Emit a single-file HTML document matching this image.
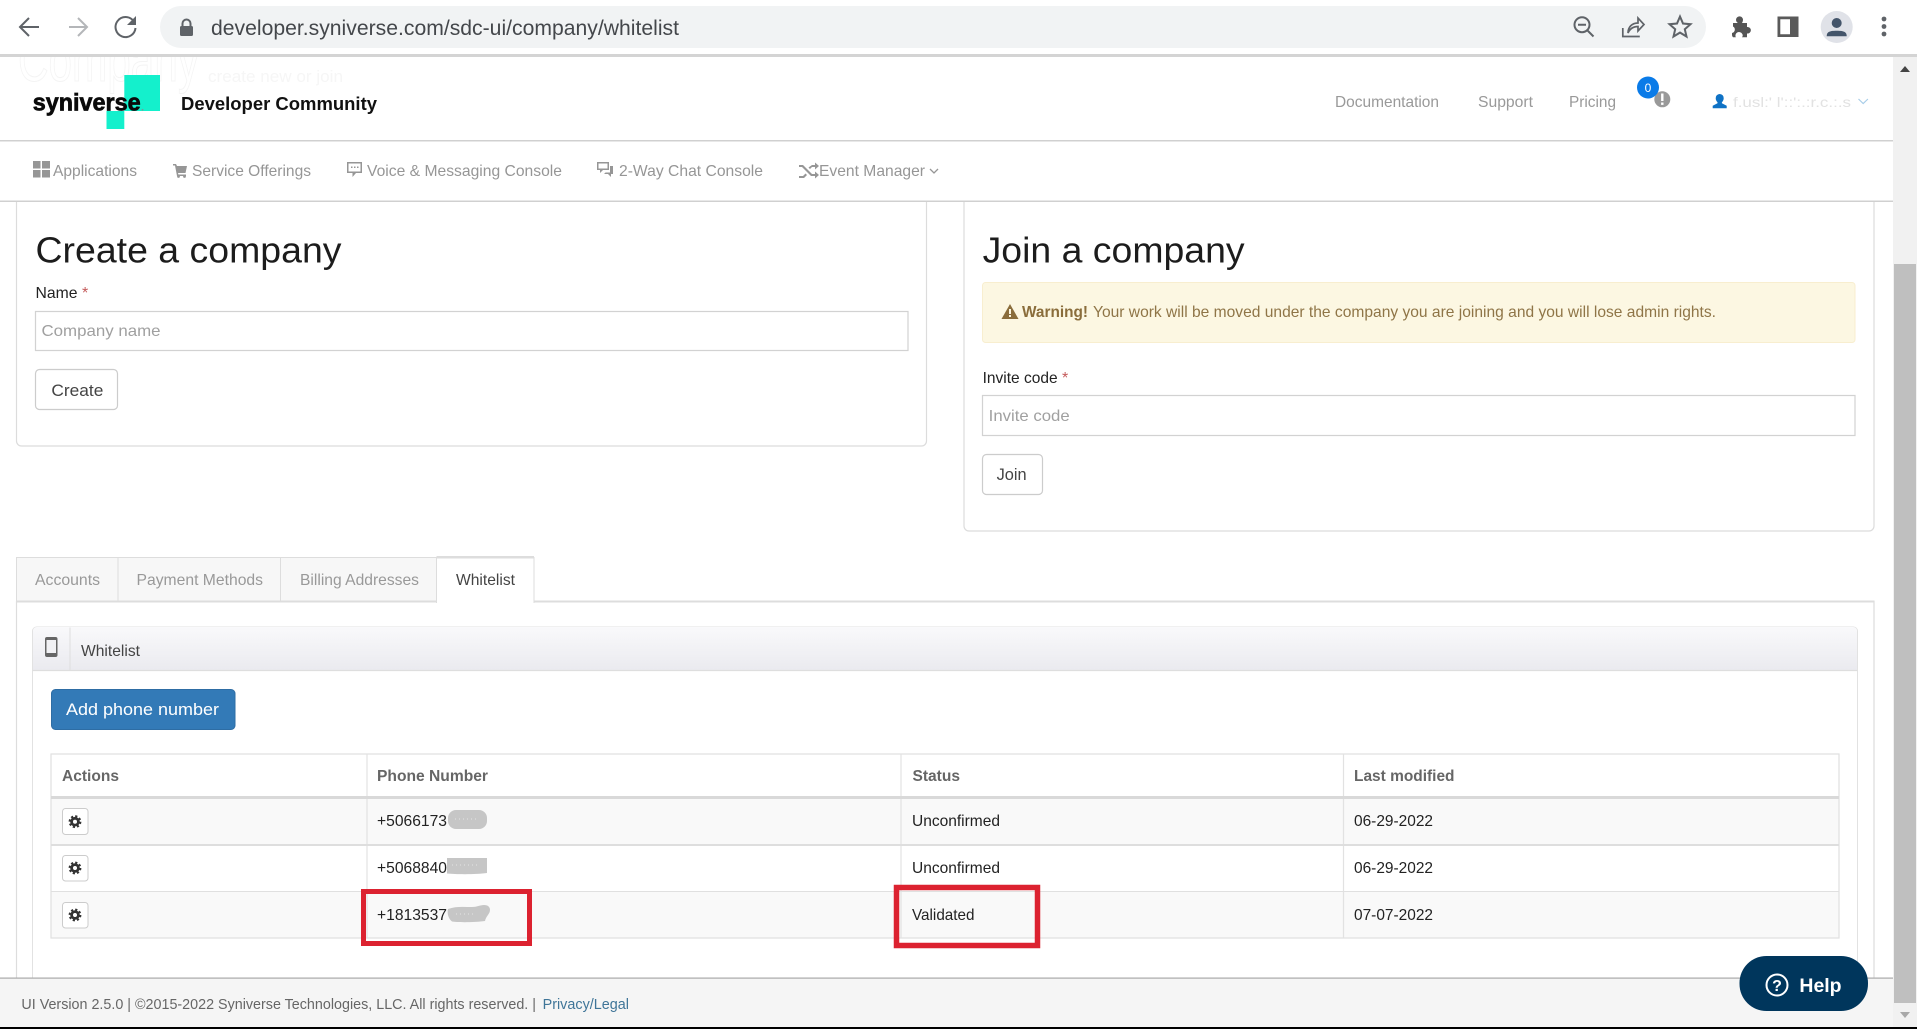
<!DOCTYPE html>
<html lang="en">
<head>
<meta charset="utf-8">
<title>Whitelist</title>
<style>
html,body{margin:0;padding:0;background:#fff;overflow:hidden;width:1917px;height:1029px}
svg{display:block}
text{font-family:"Liberation Sans",sans-serif;font-size:16px}
</style>
</head>
<body>
<svg xmlns="http://www.w3.org/2000/svg" width="1917" height="1029" viewBox="0 0 1917 1029">
<defs>
<linearGradient id="ph" x1="0" y1="0" x2="0" y2="1"><stop offset="0" stop-color="#f9f9fb"/><stop offset="1" stop-color="#eaeaef"/></linearGradient>
<clipPath id="hc"><rect x="0" y="57" width="1893" height="83"/></clipPath>
<g id="gear">
<circle r="5.400" fill="none" stroke="#333" stroke-width="2" stroke-dasharray="2.200 2.040"/>
<circle r="3.400" fill="none" stroke="#333" stroke-width="2.800"/>
<circle r="1.700" fill="#fff"/>
</g>
</defs>
<rect width="1917" height="1029" fill="#fff"/>

<!-- Browser chrome -->
<rect width="1917" height="54" fill="#fff"/>
<rect x="0" y="54" width="1917" height="3" fill="#d4d4d4"/>
<path d="M160 27a21 21 0 0 1 21-21H1685a21 21 0 0 1 0 42H181a21 21 0 0 1-21-21z" fill="#f1f3f4"/>
<path d="M39 27H21M29 18l-9 9 9 9" fill="none" stroke="#5f6368" stroke-width="2"/>
<path d="M69 27H87M78 18l9 9-9 9" fill="none" stroke="#b4b6b9" stroke-width="2"/>
<path d="M133.500 21A10 10 0 1 0 135.500 28" fill="none" stroke="#5f6368" stroke-width="2"/>
<path d="M136 16v9h-9z" fill="#5f6368"/>
<rect x="180" y="26" width="13" height="10" rx="1.500" fill="#5f6368"/>
<path d="M182.500 26v-2.500a4 4 0 0 1 8 0V26" fill="none" stroke="#5f6368" stroke-width="2"/>
<text x="211" y="35" style="font-size:21px" fill="#44474b" textLength="468" lengthAdjust="spacingAndGlyphs">developer.syniverse.com/sdc-ui/company/whitelist</text>
<circle cx="1582" cy="24.700" r="7.500" fill="none" stroke="#5f6368" stroke-width="2"/>
<path d="M1578 24.700h8M1587.500 30.500l6 6" stroke="#5f6368" stroke-width="2" fill="none"/>
<path d="M1622.800 28v8.500h17M1628 33c0-6 4-10 10-10v-5l6 6.500-6 6.500v-4.500c-5 0-8 2-10 6.500z" fill="none" stroke="#5f6368" stroke-width="1.700"/>
<path d="M1680 16.500l3 7 7.500.7-5.700 5 1.700 7.300-6.500-3.900-6.500 3.900 1.700-7.300-5.700-5 7.500-.7z" fill="none" stroke="#5f6368" stroke-width="2"/>
<path d="M1733 23h5a3.500 3.500 0 1 1 5-3.500c0 1.500-.5 2.500-1 3.500h5v4a3.300 3.300 0 1 1 0 6.500v3.800h-5c.8-1 1-2 .3-3.300a3.500 3.500 0 0 0-6.500 3.300h-2.800a3 3 0 0 1-1-2.500V33a3.500 3.500 0 0 0 1-6.500z" fill="#555"/>
<path fill-rule="evenodd" d="M1777.500 16.500h21v20.500h-21zM1780.300 19.300v15h9.700v-15z" fill="#5a5a5a"/>
<circle cx="1836.700" cy="27" r="16" fill="#e0e2e8"/>
<circle cx="1836.700" cy="23" r="5" fill="#44556a"/>
<path d="M1826.700 36.300c0-4 2-5.600 10-5.600s10 1.600 10 5.600z" fill="#44556a"/>
<circle cx="1884" cy="19" r="2.400" fill="#5f6368"/><circle cx="1884" cy="26.500" r="2.400" fill="#5f6368"/><circle cx="1884" cy="34" r="2.400" fill="#5f6368"/>

<!-- Scrollbar -->
<rect x="1893" y="57" width="24" height="972" fill="#f1f1f1"/>
<rect x="1894" y="264" width="22" height="739" fill="#bfbfbf"/>
<path d="M1905 66l5 6h-10z" fill="#444"/>
<path d="M1900 1012h10l-5 6z" fill="#a8a8a8"/>

<!-- Header -->
<g clip-path="url(#hc)">
<text x="18" y="81" style="font-size:60px" fill="none" stroke="#f4f4f4" stroke-width="1" textLength="181" lengthAdjust="spacingAndGlyphs">Company</text>
<text x="208" y="82" style="font-size:17px" fill="#f6f6f6" textLength="135" lengthAdjust="spacingAndGlyphs">create new or join</text>
</g>
<rect x="124.300" y="75" width="35.700" height="36" fill="#14f0cc"/>
<rect x="106.500" y="111" width="17.800" height="18" fill="#14f0cc"/>
<text x="32.700" y="110.700" style="font-size:24.500px;font-weight:bold" fill="#0a0a0a" stroke="#0a0a0a" stroke-width=".7" textLength="108" lengthAdjust="spacingAndGlyphs">syniverse</text>
<circle cx="142.500" cy="109.800" r=".9" fill="#7a9a96"/>
<text x="181" y="110" style="font-size:18.500px;font-weight:bold" fill="#111" textLength="196" lengthAdjust="spacingAndGlyphs">Developer Community</text>
<g fill="#999">
<text x="1335" y="107" textLength="104" lengthAdjust="spacingAndGlyphs">Documentation</text>
<text x="1478" y="107" textLength="55" lengthAdjust="spacingAndGlyphs">Support</text>
<text x="1569" y="107" textLength="47" lengthAdjust="spacingAndGlyphs">Pricing</text>
</g>
<circle cx="1662.300" cy="99.300" r="8" fill="#999"/>
<rect x="1661.100" y="93.500" width="2.400" height="7.500" fill="#fff"/><rect x="1661.100" y="102.500" width="2.400" height="2.400" fill="#fff"/>
<circle cx="1648" cy="87.500" r="11" fill="#0a7be8"/>
<text x="1648" y="92" text-anchor="middle" style="font-size:12px" fill="#fff">0</text>
<path d="M1719.700 94a4 4 0 0 1 4 4.300c0 1.800-.8 3-1.800 4v1l4.800 2.500v2.500h-14v-2.500l4.800-2.500v-1c-1-1-1.800-2.200-1.800-4a4 4 0 0 1 4-4.300z" fill="#0f72c5"/>
<text x="1733" y="107" style="font-size:14px" fill="#e2e2e2" textLength="118" lengthAdjust="spacingAndGlyphs">f.usl:' l'::':.:r.c.:.s</text>
<path d="M1858.500 99l4.700 4.500 4.700-4.500" fill="none" stroke="#a8cde8" stroke-width="1.200"/>
<rect x="0" y="140" width="1893" height="1.500" fill="#d0d0d0"/>

<!-- Nav -->
<g fill="#969696">
<rect x="33" y="161" width="7.500" height="7.500"/><rect x="42" y="161" width="8" height="7.500"/>
<rect x="33" y="170" width="7.500" height="7.500"/><rect x="42" y="170" width="8" height="7.500"/>
<path d="M173 164h3l1 2h10l-1.500 7H178l.4 1.500h7.600v1.500H177l-2-10.500h-2z"/>
<circle cx="178.500" cy="176.500" r="1.400"/><circle cx="184.500" cy="176.500" r="1.400"/>
<path fill-rule="evenodd" d="M347 162h15v11h-6l-3.500 4v-4H347zM348.500 163.500v8h12v-8z"/>
<rect x="351" y="166.500" width="1.500" height="1.500"/><rect x="354" y="166.500" width="1.500" height="1.500"/><rect x="357" y="166.500" width="1.500" height="1.500"/>
<path fill-rule="evenodd" d="M597 162h12v8h-6l-3 3v-3h-3zM598.500 163.500v5h9v-5z"/>
<path d="M610 166h3v8h-2v3l-3-3h-4l1.500-1.500h4.500z"/>
<path d="M799 165h4l9 9h3v-2.500l4 3.500-4 3.500V176h-4l-9-9h-3zM799 176h4l2.500-2.500 1.500 1.500-3 3h-5zM812 165h3v-2.500l4 3.500-4 3.500V167h-3l-2 2-1.500-1.500z"/>
<text x="53" y="176" textLength="84" lengthAdjust="spacingAndGlyphs">Applications</text>
<text x="192" y="176" textLength="119" lengthAdjust="spacingAndGlyphs">Service Offerings</text>
<text x="367" y="176" textLength="195" lengthAdjust="spacingAndGlyphs">Voice &amp; Messaging Console</text>
<text x="619" y="176" textLength="144" lengthAdjust="spacingAndGlyphs">2-Way Chat Console</text>
<text x="819" y="176" textLength="106" lengthAdjust="spacingAndGlyphs">Event Manager</text>
</g>
<path d="M930 169l4 4 4-4" fill="none" stroke="#969696" stroke-width="1.300"/>
<rect x="0" y="200.500" width="1893" height="1.500" fill="#d0d0d0"/>

<!-- Create card -->
<path d="M16.500 202V441a5 5 0 0 0 5 5H921.500a5 5 0 0 0 5-5V202" fill="#fff" stroke="#dcdcdc" stroke-width="1.200"/>
<text x="35.500" y="262.700" style="font-size:36px" fill="#1c1c1c" textLength="306" lengthAdjust="spacingAndGlyphs">Create a company</text>
<text x="35.500" y="298" fill="#222" textLength="42" lengthAdjust="spacingAndGlyphs">Name</text>
<text x="82" y="298" fill="#c45a5a">*</text>
<rect x="35.500" y="311.500" width="872.500" height="39" fill="#fff" stroke="#d2d2d2" stroke-width="1.200"/>
<text x="41.500" y="336" fill="#a0a0a0" textLength="119" lengthAdjust="spacingAndGlyphs">Company name</text>
<rect x="35.500" y="369.500" width="82" height="40" rx="4" fill="#fff" stroke="#ccc" stroke-width="1.200"/>
<text x="51.400" y="396" style="font-size:17px" fill="#444" textLength="52" lengthAdjust="spacingAndGlyphs">Create</text>

<!-- Join card -->
<path d="M964 202V526a5 5 0 0 0 5 5H1869a5 5 0 0 0 5-5V202" fill="#fff" stroke="#dcdcdc" stroke-width="1.200"/>
<text x="982.600" y="262.700" style="font-size:36px" fill="#1c1c1c" textLength="262" lengthAdjust="spacingAndGlyphs">Join a company</text>
<rect x="982.500" y="282.500" width="872.500" height="60" rx="3" fill="#fcf7e2" stroke="#f8eecf"/>
<path d="M1010 304l8.500 15h-17z" fill="#8a6d3b"/>
<rect x="1009" y="309" width="2" height="5" fill="#fcf7e2"/><rect x="1009" y="315" width="2" height="2" fill="#fcf7e2"/>
<text x="1022" y="317" style="font-weight:bold" fill="#8a6d3b" textLength="66" lengthAdjust="spacingAndGlyphs">Warning!</text>
<text x="1093" y="317" fill="#8f7547" textLength="623" lengthAdjust="spacingAndGlyphs">Your work will be moved under the company you are joining and you will lose admin rights.</text>
<text x="982.600" y="383" fill="#222" textLength="75" lengthAdjust="spacingAndGlyphs">Invite code</text>
<text x="1062" y="383" fill="#c45a5a">*</text>
<rect x="982.500" y="395.500" width="872.500" height="40" fill="#fff" stroke="#d2d2d2" stroke-width="1.200"/>
<text x="988.700" y="421" fill="#a0a0a0" textLength="81" lengthAdjust="spacingAndGlyphs">Invite code</text>
<rect x="982.500" y="454.500" width="60" height="40" rx="4" fill="#fff" stroke="#ccc" stroke-width="1.200"/>
<text x="996.600" y="480" style="font-size:17px" fill="#444" textLength="30" lengthAdjust="spacingAndGlyphs">Join</text>

<!-- Tabs -->
<rect x="16.500" y="557.500" width="101.500" height="44" fill="#f7f7f7" stroke="#ddd"/>
<rect x="118" y="557.500" width="162.500" height="44" fill="#f7f7f7" stroke="#ddd"/>
<rect x="280.500" y="557.500" width="156" height="44" fill="#f7f7f7" stroke="#ddd"/>
<path d="M16.500 978V601.500H1874V978" fill="#fff" stroke="#ddd" stroke-width="1.200"/>
<rect x="16" y="600.500" width="1858.500" height="2" fill="#ddd"/>
<rect x="436.500" y="557" width="97.500" height="46" fill="#fff"/>
<path d="M436.500 603V557M534 557V603" stroke="#ddd" fill="none"/>
<rect x="436.500" y="556" width="97.500" height="2.500" fill="#ddd"/>
<g fill="#999">
<text x="35" y="585" textLength="65" lengthAdjust="spacingAndGlyphs">Accounts</text>
<text x="136.500" y="585" textLength="126.500" lengthAdjust="spacingAndGlyphs">Payment Methods</text>
<text x="300" y="585" textLength="119" lengthAdjust="spacingAndGlyphs">Billing Addresses</text>
</g>
<text x="456" y="585" fill="#444" textLength="59" lengthAdjust="spacingAndGlyphs">Whitelist</text>

<!-- Panel -->
<path d="M32.500 978V631a4 4 0 0 1 4-4H1853.500a4 4 0 0 1 4 4V978" fill="#fff" stroke="#e2e2e2"/>
<path d="M33 670.500V631a4 4 0 0 1 4-4H1853a4 4 0 0 1 4 4v39.500z" fill="url(#ph)"/>
<path d="M32.500 670.500H1857.500" stroke="#dedede" stroke-width="1.200"/>
<path d="M70 627.500V670" stroke="#dedede"/>
<rect x="45" y="637" width="12.500" height="20" rx="2" fill="#666"/>
<rect x="46.500" y="640" width="9.500" height="13" fill="#f1f1f4"/>
<text x="81" y="656" fill="#444" textLength="59" lengthAdjust="spacingAndGlyphs">Whitelist</text>
<rect x="51.500" y="689.500" width="183.500" height="40" rx="4" fill="#337ab7" stroke="#2e6da4"/>
<text x="66" y="715" style="font-size:17px" fill="#fff" textLength="153" lengthAdjust="spacingAndGlyphs">Add phone number</text>

<!-- Table -->
<rect x="51" y="799" width="1788" height="45" fill="#f9f9f9"/>
<rect x="51" y="892" width="1788" height="46" fill="#f9f9f9"/>
<rect x="51" y="754" width="1788" height="184" fill="none" stroke="#e0e0e0" stroke-width="1.200"/>
<path d="M367 754V938M901 754V938M1343.500 754V938" stroke="#e2e2e2" stroke-width="1.200"/>
<rect x="51" y="796" width="1788" height="3" fill="#d9d9d9"/>
<rect x="51" y="844" width="1788" height="2" fill="#dedede"/>
<rect x="51" y="891" width="1788" height="1" fill="#e0e0e0"/>
<g fill="#666">
<text x="62" y="781" style="font-weight:bold" textLength="57" lengthAdjust="spacingAndGlyphs">Actions</text>
<text x="377" y="781" style="font-weight:bold" textLength="111" lengthAdjust="spacingAndGlyphs">Phone Number</text>
<text x="912.500" y="781" style="font-weight:bold" textLength="47.500" lengthAdjust="spacingAndGlyphs">Status</text>
<text x="1354" y="781" style="font-weight:bold" textLength="100.500" lengthAdjust="spacingAndGlyphs">Last modified</text>
</g>
<rect x="62.500" y="808.500" width="25.500" height="26" rx="3" fill="#fff" stroke="#ccc"/>
<rect x="62.500" y="855.500" width="25.500" height="25.500" rx="3" fill="#fff" stroke="#ccc"/>
<rect x="62.500" y="902.500" width="25.500" height="25.500" rx="3" fill="#fff" stroke="#ccc"/>
<use href="#gear" x="75" y="821.700"/>
<use href="#gear" x="75" y="868"/>
<use href="#gear" x="75" y="915"/>
<g fill="#222">
<text x="377" y="826" textLength="70" lengthAdjust="spacingAndGlyphs">+5066173</text>
<text x="377" y="873" textLength="70" lengthAdjust="spacingAndGlyphs">+5068840</text>
<text x="377" y="920" textLength="70" lengthAdjust="spacingAndGlyphs">+1813537</text>
<text x="912" y="826" textLength="88" lengthAdjust="spacingAndGlyphs">Unconfirmed</text>
<text x="912" y="873" textLength="88" lengthAdjust="spacingAndGlyphs">Unconfirmed</text>
<text x="912" y="920" textLength="62.500" lengthAdjust="spacingAndGlyphs">Validated</text>
<text x="1354" y="826" textLength="79" lengthAdjust="spacingAndGlyphs">06-29-2022</text>
<text x="1354" y="873" textLength="79" lengthAdjust="spacingAndGlyphs">06-29-2022</text>
<text x="1354" y="920" textLength="79" lengthAdjust="spacingAndGlyphs">07-07-2022</text>
</g>
<rect x="448" y="810" width="39" height="19" rx="8" fill="#c6c6c6"/>
<path d="M447 858h40v15c-10 1.500-30 1.500-40 .5z" fill="#c6c6c6"/>
<path d="M448 909c8-3 16-2 24-2 5 0 8-2 12-2 4 0 6 2 6 5 0 4-4 6-5 11-10 1.500-28 1.500-33 .5-4-3-5-9-4-12.500z" fill="#c6c6c6"/>
<path d="M455 819H478M452 865H480M456 914H476" stroke="#e4e4e4" stroke-width="1" stroke-dasharray="1 3" fill="none"/>

<!-- Red annotations -->
<rect x="363.500" y="891.500" width="166" height="52" fill="none" stroke="#dc2230" stroke-width="5"/>
<rect x="896.500" y="887.500" width="141" height="58" fill="none" stroke="#dc2230" stroke-width="5.500"/>

<!-- Footer -->
<rect x="0" y="978" width="1893" height="49" fill="#f5f5f5"/>
<rect x="0" y="977.500" width="1893" height="1.200" fill="#a9a9a9"/>
<text x="21.400" y="1009" style="font-size:14.500px" fill="#666" textLength="514.600" lengthAdjust="spacingAndGlyphs">UI Version 2.5.0 | ©2015-2022 Syniverse Technologies, LLC. All rights reserved. |</text>
<text x="542.600" y="1009" style="font-size:14.500px" fill="#3f7598" textLength="86.400" lengthAdjust="spacingAndGlyphs">Privacy/Legal</text>

<!-- Help -->
<rect x="1739.500" y="956" width="128.500" height="55" rx="27" fill="#00365c"/>
<circle cx="1777" cy="985" r="10.500" fill="none" stroke="#fff" stroke-width="2"/>
<text x="1777" y="991" text-anchor="middle" style="font-size:16px;font-weight:bold" fill="#fff">?</text>
<text x="1799.400" y="992" style="font-size:19px;font-weight:bold" fill="#fff" textLength="42.200" lengthAdjust="spacingAndGlyphs">Help</text>

<rect x="0" y="1027" width="1917" height="2" fill="#000"/>
</svg>
</body>
</html>
